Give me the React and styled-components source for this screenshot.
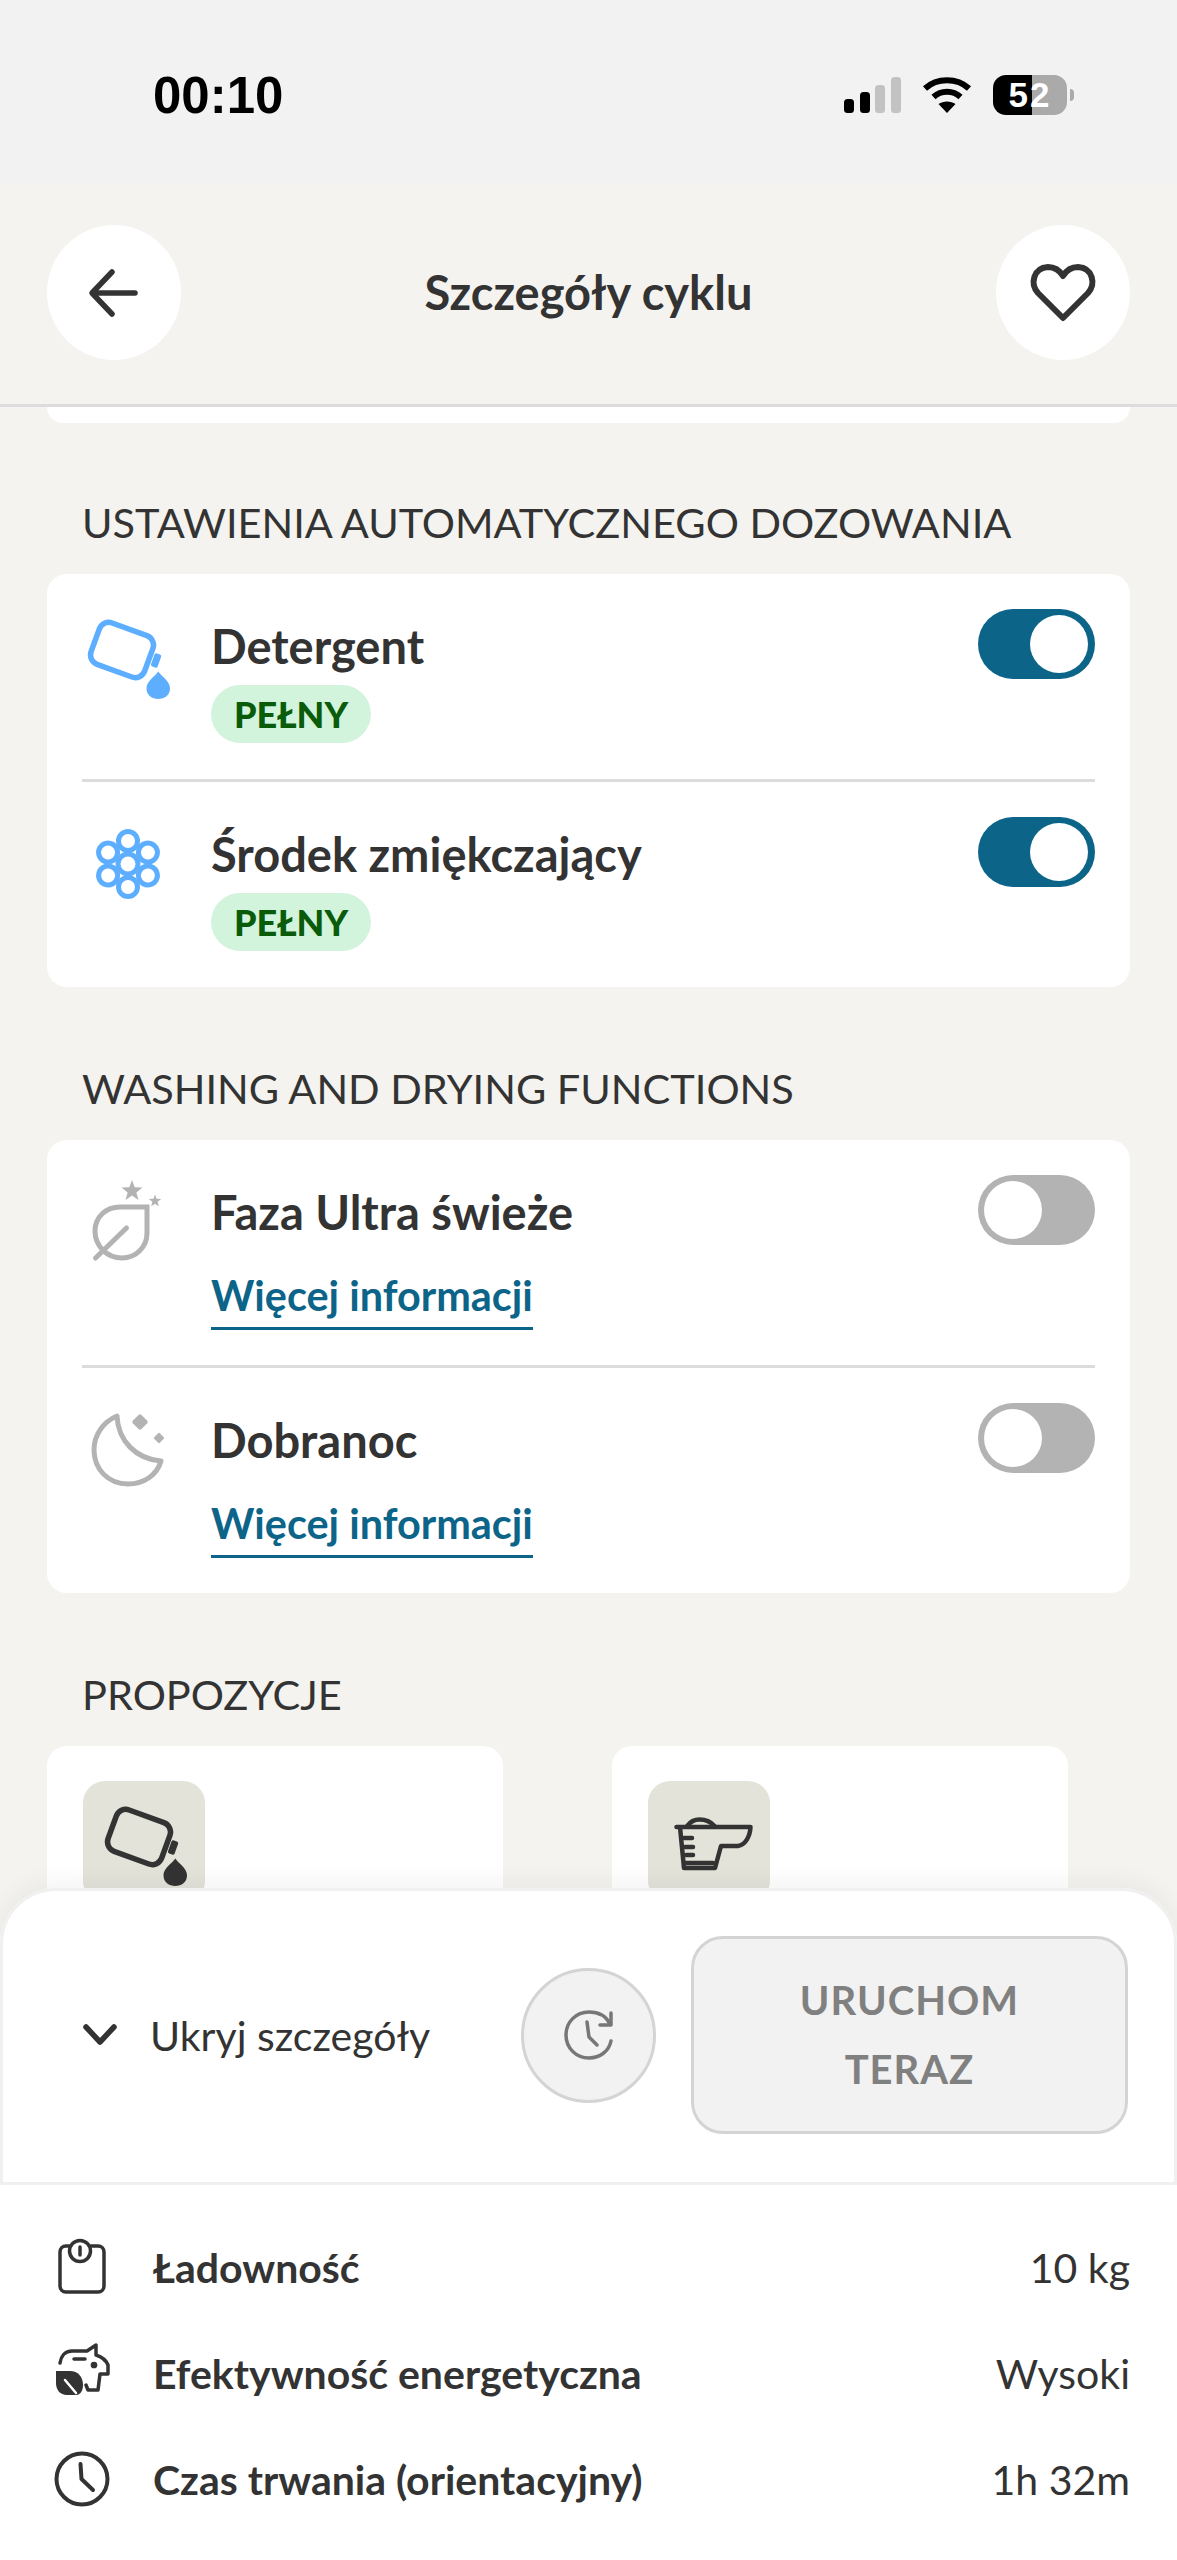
import React from 'react';
import styled, { createGlobalStyle } from 'styled-components';

const Global = createGlobalStyle`
  html, body { margin: 0; padding: 0; background: #f4f3ef; }
  * { box-sizing: border-box; }
`;

const Page = styled.div`
  position: relative;
  width: 1177px;
  height: 2560px;
  overflow: hidden;
  display: flex;
  flex-direction: column;
  background: #f4f3ef;
  color: #333;
  font-family: Lato, "Noto Sans", sans-serif;
`;

const StatusBar = styled.div`
  height: 183px;
  flex: none;
  background: #f2f2f2;
  display: flex;
  justify-content: space-between;
  align-items: flex-start;
  padding: 75px 110px 0 153px;
`;
const Clock = styled.div`
  font-family: "Liberation Sans", sans-serif;
  font-weight: 700;
  font-size: 51px;
  line-height: 42px;
  color: #000;
`;
const StatusIcons = styled.div`
  display: flex;
  align-items: flex-start;
`;
const Signal = styled.svg`
  width: 57px;
  height: 36px;
  margin-top: 2px;
  margin-right: 21px;
`;
const Wifi = styled.svg`
  width: 50px;
  height: 36px;
  margin-top: 2px;
  margin-right: 21px;
`;
const Battery = styled.div`
  position: relative;
  width: 74px;
  height: 40px;
  border-radius: 13px;
  background: linear-gradient(to right, #000 53%, #aaa 53%);
  color: #fff;
  font-family: "Liberation Sans", sans-serif;
  font-weight: 700;
  font-size: 35px;
  letter-spacing: 2px;
  line-height: 40px;
  text-align: center;
  &::after {
    content: "";
    position: absolute;
    left: 77px;
    top: 14px;
    width: 4px;
    height: 12px;
    border-radius: 0 6px 6px 0;
    background: #aaa;
  }
`;

const Header = styled.header`
  height: 224px;
  flex: none;
  border-bottom: 3px solid #dcdcdc;
  display: flex;
  align-items: flex-start;
  justify-content: space-between;
  padding: 42px 47px 0;
`;
const RoundButton = styled.button`
  width: 134px;
  height: 135px;
  border: 0;
  padding: 0;
  border-radius: 50%;
  background: #fff;
  display: flex;
  align-items: center;
  justify-content: center;
`;
const Title = styled.h1`
  margin: 0;
  font-size: 47px;
  font-weight: 700;
  line-height: 135px;
  color: #333;
`;

const Content = styled.main`
  flex: 1;
  overflow: hidden;
  padding: 0 47px;
`;
const CutCard = styled.div`
  height: 16px;
  background: #fff;
  border-radius: 0 0 20px 20px;
  margin: 0 0 73px;
`;
const SectionLabel = styled.h2`
  margin: 0 0 26px 35px;
  font-size: 41.5px;
  font-weight: 400;
  line-height: 52px;
  color: #333;
`;
const Card = styled.section`
  background: #fff;
  border-radius: 20px;
  padding: 0 35px;
  margin-bottom: 75px;
`;
const Row = styled.div`
  display: grid;
  grid-template-columns: 129px 1fr auto;
  align-items: start;
  padding: 35px 0 ${p => p.$bottom || 35}px;
  & + & { border-top: 3px solid #dcdcdc; }
`;
const RowIcon = styled.svg`
  width: 90px;
  height: 90px;
  margin-left: 2px;
  display: block;
`;
const RowTitle = styled.div`
  font-size: 47px;
  font-weight: 700;
  line-height: 74px;
  color: #333;
`;
const Pill = styled.span`
  display: block;
  width: 160px;
  height: 58px;
  margin: 2px 0 0;
  border-radius: 29px;
  background: #d2f4dc;
  color: #0a5c0a;
  font-size: 36px;
  font-weight: 900;
  line-height: 58px;
  text-align: center;
`;
const InfoLink = styled.a`
  display: table;
  margin: 14px 0 0;
  height: 67px;
  border-bottom: 3px solid #0c6489;
  color: #0c6489;
  font-size: 41.4px;
  font-weight: 700;
  line-height: 64px;
`;
const Toggle = styled.div`
  position: relative;
  width: 117px;
  height: 70px;
  border-radius: 35px;
  background: ${p => (p.$on ? '#0c6489' : '#b3b3b3')};
  &::after {
    content: "";
    position: absolute;
    top: 6px;
    left: ${p => (p.$on ? '52px' : '6px')};
    width: 58px;
    height: 58px;
    border-radius: 50%;
    background: #fff;
  }
`;

const Suggestions = styled.div`
  display: flex;
  gap: 109px;
`;
const SuggestionCard = styled.div`
  flex: none;
  width: 456px;
  height: 300px;
  background: #fff;
  border-radius: 20px;
  padding: 35px 36px;
`;
const Tile = styled.div`
  width: 122px;
  height: 122px;
  border-radius: 22px;
  background: #e3e3da;
  padding: 15px 16px;
`;

const Sheet = styled.aside`
  position: absolute;
  left: 0;
  right: 0;
  bottom: 0;
  height: 672px;
  background: #fff;
  border-radius: 56px 56px 0 0;
  box-shadow: 0 -6px 24px rgba(0, 0, 0, 0.05);
  display: flex;
  flex-direction: column;
`;
const ActionBar = styled.div`
  height: 297px;
  flex: none;
  display: flex;
  align-items: center;
  padding: 0 46px 3px 80px;
  border: 3px solid #f0f0f0;
  border-radius: 56px 56px 0 0;
`;
const HideToggle = styled.div`
  flex: 1;
  display: flex;
  align-items: center;
  gap: 33px;
  font-size: 41px;
  color: #333;
`;
const TimerButton = styled.button`
  width: 135px;
  height: 135px;
  padding: 0;
  margin-right: 35px;
  border-radius: 50%;
  background: #f2f2f2;
  border: 3px solid #d4d4d4;
  display: flex;
  align-items: center;
  justify-content: center;
`;
const StartButton = styled.button`
  width: 437px;
  height: 198px;
  border-radius: 32px;
  background: #f2f2f2;
  border: 3px solid #d4d4d4;
  color: #808080;
  font-family: inherit;
  font-size: 40px;
  font-weight: 700;
  line-height: 69px;
  letter-spacing: 1px;
  padding: 0 80px;
`;
const Details = styled.div`
  padding: 29px 47px 0 52px;
`;
const DetailRow = styled.div`
  display: flex;
  align-items: center;
  height: 106px;
`;
const DetailIcon = styled.svg`
  width: 60px;
  height: 60px;
  flex: none;
  margin-right: 41px;
`;
const DetailLabel = styled.div`
  flex: 1;
  font-size: 41px;
  font-weight: 700;
  color: #333;
`;
const DetailValue = styled.div`
  font-size: 41px;
  color: #333;
`;

const Bottle = ({ color, width = 5.5 }) => (
  <RowIcon as="svg" viewBox="0 0 90 90" fill="none">
    <rect x="9.5" y="19" width="57" height="44" rx="10" transform="rotate(20 38 41)" stroke={color} strokeWidth={width} />
    <rect x="68.5" y="44.5" width="7" height="14" rx="2" transform="rotate(20 72 51.7)" fill={color} />
    <path d="M74.3 62.5 C78 68 86 72 86 79.5 C86 86 80.5 90 74.3 90 C68 90 62.5 86 62.5 79.5 C62.5 72 70.5 68 74.3 62.5Z" fill={color} />
  </RowIcon>
);

const Flower = () => (
  <RowIcon viewBox="0 0 90 90" fill="none" stroke="#5eaeff" strokeWidth="5">
    {[0, 60, 120, 180, 240, 300].map(a => (
      <circle key={a} cx="44" cy="24" r="9.5" transform={`rotate(${a} 44 47)`} />
    ))}
    <circle cx="44" cy="47" r="10" />
  </RowIcon>
);

const Star = ({ cx, cy, r }) => {
  const pts = [];
  for (let i = 0; i < 10; i++) {
    const rad = i % 2 ? r * 0.42 : r;
    const a = (Math.PI / 5) * i - Math.PI / 2;
    pts.push(`${(cx + rad * Math.cos(a)).toFixed(2)},${(cy + rad * Math.sin(a)).toFixed(2)}`);
  }
  return <polygon points={pts.join(' ')} fill="#b3b3b3" stroke="none" />;
};

const LeafStars = () => (
  <RowIcon viewBox="0 0 90 90" fill="none" stroke="#b3b3b3" strokeWidth="5" strokeLinecap="round">
    <Star cx={48} cy={16} r={11} />
    <Star cx={71} cy={26} r={6.5} />
    <path d="M63 32 L63 58 C63 72 52 83 38 83 C23 83 11 71 11 56 C11 42 22 32 36 32 Z" />
    <path d="M11.5 83 L42.5 53" />
  </RowIcon>
);

const Moon = () => (
  <RowIcon viewBox="0 0 90 90" fill="none" stroke="#b3b3b3" strokeWidth="5" strokeLinejoin="round">
    <path d="M33 13 C34 38 52 56 77 58 C73 72 60 81 44 81 C24 81 10 66 10 47 C10 32 19 19 33 13 Z" />
    <rect x="50" y="13" width="12" height="12" rx="2" transform="rotate(45 56 19)" fill="#b3b3b3" stroke="none" />
    <rect x="71" y="31" width="8" height="8" rx="1.5" transform="rotate(45 75 35)" fill="#b3b3b3" stroke="none" />
  </RowIcon>
);

const Cup = () => (
  <RowIcon viewBox="0 0 90 90" fill="none" stroke="#333" strokeWidth="4.5" strokeLinejoin="round" strokeLinecap="round">
    <path d="M10.5 31 H84.5 C84 41 79 49 72 50 H55 L49 72 H18 L14 31" />
    <path d="M21 30 C24 26 29 23.5 33.5 23.5 C39 23.5 45 26 48.5 30" />
    <path d="M18 42 H26 M19 51 H27 M20 59 H27 M20 67 H47" />
  </RowIcon>
);

const items = [
  ['Ładowność', '10 kg'],
  ['Efektywność energetyczna', 'Wysoki'],
  ['Czas trwania (orientacyjny)', '1h 32m'],
];

const DetailGlyph = ({ i }) => {
  if (i === 0) {
    return (
      <DetailIcon viewBox="0 0 60 60" fill="none" stroke="#333" strokeWidth="3.5" strokeLinecap="round">
        <path d="M17 9 H14 C10.5 9 8 11.5 8 15 V49 C8 52.5 10.5 55 14 55 H46 C49.5 55 52 52.5 52 49 V15 C52 11.5 49.5 9 46 9 H39" />
        <circle cx="28" cy="14" r="10.5" />
        <path d="M28 10 V18" />
      </DetailIcon>
    );
  }
  if (i === 1) {
    return (
      <DetailIcon viewBox="0 0 60 60" fill="none" stroke="#333" strokeWidth="3.5" strokeLinecap="round" strokeLinejoin="round">
        <path d="M8 20 C9 13 13 8 20 8 H35 L44 2 V12 C50 14 54 17 56 22 V31 H48 L46 47 H36 L34 42" />
        <path d="M22 16 H33" />
        <circle cx="42" cy="22" r="1.6" fill="#333" />
        <path d="M4 28 H18 C26 28 31 34 31 42 C31 47 29 51 25 52 H15 C8 52 4 47 4 40 Z" fill="#333" stroke="none" />
        <path d="M13 37 L24 50" stroke="#fff" strokeWidth="2.5" />
      </DetailIcon>
    );
  }
  return (
    <DetailIcon viewBox="0 0 60 60" fill="none" stroke="#333" strokeWidth="4" strokeLinecap="round" strokeLinejoin="round">
      <circle cx="30" cy="30" r="25.5" />
      <path d="M28.5 15 L29.5 30 L41 41" />
    </DetailIcon>
  );
};

export default function App() {
  return (
    <Page>
      <Global />
      <StatusBar>
        <Clock>00:10</Clock>
        <StatusIcons>
          <Signal viewBox="0 0 57 36">
            <rect x="0" y="22" width="10" height="14" rx="3.5" fill="#000" />
            <rect x="16" y="15" width="10" height="21" rx="3.5" fill="#000" />
            <rect x="31" y="8" width="10" height="28" rx="3.5" fill="#c2c2c2" />
            <rect x="47" y="0" width="10" height="36" rx="3.5" fill="#c2c2c2" />
          </Signal>
          <Wifi viewBox="0 0 50 36" fill="none" stroke="#000" strokeWidth="6">
            <path d="M3 11.5 C15 0.5 35 0.5 47 11.5" />
            <path d="M11.5 20 C19 13 31 13 38.5 20" />
            <path d="M25 36 L16.5 27 C21 23.5 29 23.5 33.5 27 Z" fill="#000" stroke="none" />
          </Wifi>
          <Battery>52</Battery>
        </StatusIcons>
      </StatusBar>
      <Header>
        <RoundButton aria-label="Wstecz">
          <svg width="60" height="60" viewBox="0 0 60 60" fill="none" stroke="#333" strokeWidth="5.5" strokeLinecap="round" strokeLinejoin="round">
            <path d="M51 30 H9" />
            <path d="M28 9 L8 30 L28 51" />
          </svg>
        </RoundButton>
        <Title>Szczegóły cyklu</Title>
        <RoundButton aria-label="Ulubione">
          <svg width="70" height="70" viewBox="0 0 70 70" fill="none" stroke="#333" strokeWidth="6" strokeLinejoin="round">
            <path d="M35 60 L10 35 C2 26 5 10 20 9 C27 9 32 13 35 18 C38 13 43 9 50 9 C65 10 68 26 60 35 Z" />
          </svg>
        </RoundButton>
      </Header>
      <Content>
        <CutCard />
        <SectionLabel>USTAWIENIA AUTOMATYCZNEGO DOZOWANIA</SectionLabel>
        <Card>
          <Row $bottom={36}>
            <Bottle color="#5eaeff" />
            <div>
              <RowTitle>Detergent</RowTitle>
              <Pill>PEŁNY</Pill>
            </div>
            <Toggle $on />
          </Row>
          <Row $bottom={36}>
            <Flower />
            <div>
              <RowTitle>Środek zmiękczający</RowTitle>
              <Pill>PEŁNY</Pill>
            </div>
            <Toggle $on />
          </Row>
        </Card>
        <SectionLabel>WASHING AND DRYING FUNCTIONS</SectionLabel>
        <Card>
          <Row>
            <LeafStars />
            <div>
              <RowTitle>Faza Ultra świeże</RowTitle>
              <InfoLink>Więcej informacji</InfoLink>
            </div>
            <Toggle />
          </Row>
          <Row>
            <Moon />
            <div>
              <RowTitle>Dobranoc</RowTitle>
              <InfoLink>Więcej informacji</InfoLink>
            </div>
            <Toggle />
          </Row>
        </Card>
        <SectionLabel>PROPOZYCJE</SectionLabel>
        <Suggestions>
          <SuggestionCard>
            <Tile><Bottle color="#333" /></Tile>
          </SuggestionCard>
          <SuggestionCard>
            <Tile><Cup /></Tile>
          </SuggestionCard>
        </Suggestions>
      </Content>
      <Sheet>
        <ActionBar>
          <HideToggle>
            <svg width="34" height="22" viewBox="0 0 34 22" fill="none" stroke="#333" strokeWidth="5.5" strokeLinecap="round" strokeLinejoin="round">
              <path d="M3 3 L17 18 L31 3" />
            </svg>
            <span>Ukryj szczegóły</span>
          </HideToggle>
          <TimerButton aria-label="Opóźnij">
            <svg width="50" height="50" viewBox="0 0 50 50" fill="none" stroke="#777" strokeWidth="3.5" strokeLinecap="round" strokeLinejoin="round">
              <path d="M46 14 C42 6 34 2 25 2 C12 2 2 12 2 25 C2 38 12 48 25 48 C36 48 45 41 47 31" />
              <path d="M47 3 V15 H36" />
              <path d="M23 12 L25 27 L33 35" />
            </svg>
          </TimerButton>
          <StartButton disabled>URUCHOM TERAZ</StartButton>
        </ActionBar>
        <Details>
          {items.map(([label, value], i) => (
            <DetailRow key={label}>
              <DetailGlyph i={i} />
              <DetailLabel>{label}</DetailLabel>
              <DetailValue>{value}</DetailValue>
            </DetailRow>
          ))}
        </Details>
      </Sheet>
    </Page>
  );
}
